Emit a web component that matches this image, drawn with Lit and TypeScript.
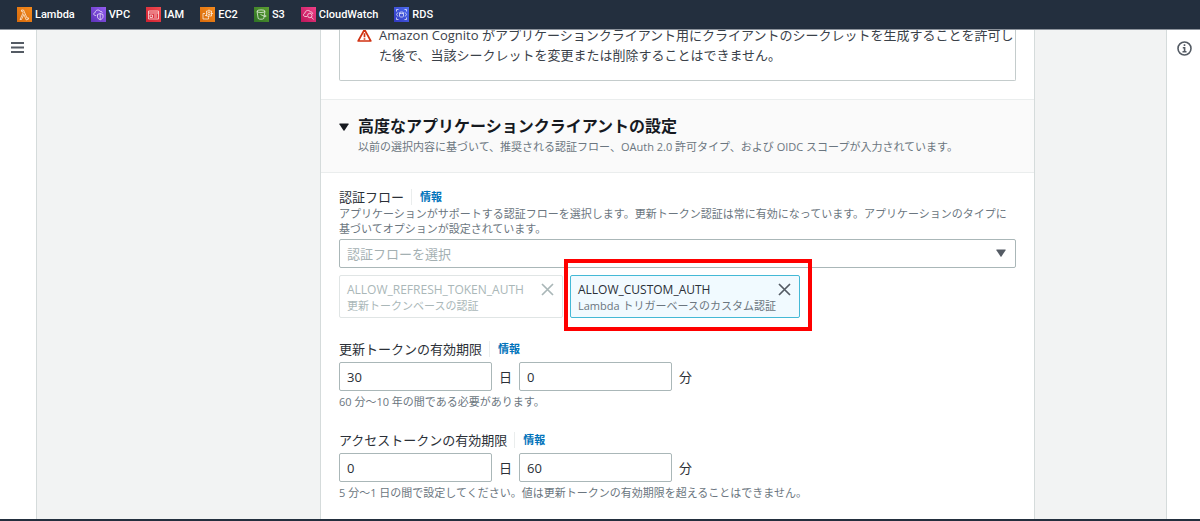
import { LitElement, html, css, svg } from "lit";
import { customElement, state } from "lit/decorators.js";

const glyphs: Record<string, unknown> = {
  Lambda: svg`<path d="M4.5 3h2l3.6 8.2 1.1-.5.5 1.3-2.4 1L6.800 7.400 4.500 12.500H3L6.100 5.800 5.600 4.400H4.500Z"/>`,
  VPC: svg`<path d="M5.200 8.500H4.300C2.200 8.300 2.300 5.700 4.200 5.500 4.500 2.700 8.200 2.200 9.200 4.400c1.300-.3 2 .4 2 1.400M6.500 7.500 9.200 6.500l2.800 1v2.400c0 1.400-1.500 2.400-2.800 2.900-1.300-.5-2.700-1.500-2.700-2.900ZM9.200 6.500v6"/>`,
  IAM: svg`<path d="M2.500 4h10v8h-10ZM2.500 6h10M4 8h2.500v2.500H4ZM8 8h3M8 10h3"/>`,
  EC2: svg`<path d="M6.500 4h5v5h-5ZM5 6.500H3v5.500h5.500V10.500M9 4V2.500M11.500 6.500H13M5 8.500h1.500M8.500 9v1.500"/><circle cx="9" cy="6.500" r="1.200"/>`,
  S3: svg`<ellipse cx="7" cy="4.200" rx="4" ry="1.300"/><path d="M3 4.200 4.200 11.500c1 1 4.600 1 5.600 0L11 4.200M6.500 7.500l4.500 2c1.500.5 1.500-.8 0-1.500"/>`,
  CloudWatch: svg`<path d="M6 9.500H4C1.800 9.200 2.200 6.400 4 6.200 4.200 3 8.500 2.500 9.400 5c1.600-.3 2.300.8 2.300 2"/><circle cx="8.800" cy="8.500" r="2.200"/><path d="m10.400 10.200 2.200 2.300"/>`,
  RDS: svg`<ellipse cx="7.500" cy="5.800" rx="2" ry=".8"/><path d="M5.500 5.800v3.500c.5 1 3.500 1 4 0V5.800M2.500 4.500V2.500h2M10.500 2.500h2v2M2.500 10.500v2h2M10.500 12.500h2v-2M3.800 5.500 2.600 7.500l1.200 2M11.200 5.500l1.200 2-1.200 2"/>`,
};

const services = [
  { name: "Lambda", from: "#f58a1c", to: "#d66a0c" },
  { name: "VPC", from: "#945df2", to: "#5c31b8" },
  { name: "IAM", from: "#f04a50", to: "#ce2030" },
  { name: "EC2", from: "#f58a1c", to: "#d66a0c" },
  { name: "S3", from: "#5c9e31", to: "#2d7224" },
  { name: "CloudWatch", from: "#f13f87", to: "#ba1659" },
  { name: "RDS", from: "#4d6cf0", to: "#3138c0" },
];

const validity = [
  {
    id: "refresh",
    label: "更新トークンの有効期限",
    days: 30,
    minutes: 0,
    hint: "60 分～10 年の間である必要があります。",
  },
  {
    id: "access",
    label: "アクセストークンの有効期限",
    days: 0,
    minutes: 60,
    hint: "5 分～1 日の間で設定してください。値は更新トークンの有効期限を超えることはできません。",
  },
];

@customElement("app-root")
export class AppRoot extends LitElement {
  static styles = css`
    :host {
      display: flex;
      flex-direction: column;
      height: 100vh;
      overflow: hidden;
      background: #f2f3f3;
      color: #2b3037;
      font: 13px/20px "Open Sans", "Noto Sans CJK JP", sans-serif;
    }
    * {
      box-sizing: border-box;
    }
    button,
    input,
    select {
      font: inherit;
      color: inherit;
      margin: 0;
    }
    button {
      display: flex;
      padding: 0;
      border: 0;
      background: none;
      cursor: pointer;
    }
    svg {
      display: block;
      flex: none;
    }
    .services {
      display: flex;
      align-items: center;
      gap: 16px;
      flex: none;
      height: 30px;
      padding: 0 17px;
      background: #232f3e;
      border-bottom: 1px solid #8d949c;
      z-index: 1;
    }
    .service {
      display: flex;
      align-items: center;
      gap: 3px;
      color: #fff;
      font-family: Roboto, "Open Sans", sans-serif;
      font-size: 11px;
      font-weight: 500;
      text-decoration: none;
    }
    .service-icon {
      fill: none;
      stroke: #fff;
      stroke-opacity: 0.85;
      stroke-width: 0.8;
    }
    .body {
      display: flex;
      flex: 1;
      min-height: 0;
    }
    .rail {
      flex: none;
      background: #fff;
      padding: 11px 10px;
    }
    .rail-left {
      width: 37px;
      border-right: 1px solid #d5dbdb;
    }
    .rail-right {
      width: 34px;
      border-left: 1px solid #d5dbdb;
    }
    .footer {
      flex: none;
      height: 2px;
      background: #232f3e;
    }
    main {
      flex: 1;
      min-width: 0;
      overflow: hidden;
      padding: 0 131px 0 283px;
    }
    .card {
      min-height: 100%;
      background: #fff;
      border: 1px solid #d5dbdb;
      border-width: 0 1px;
    }
    .alert {
      display: flex;
      gap: 7px;
      margin: -5px 18px 18px;
      padding: 0 0 15px 17px;
      border: 1px solid #c4cccc;
      border-top: 0;
      border-radius: 0 0 2px 2px;
      color: #3a4149;
    }
    .alert p {
      margin: 0;
    }
    .alert svg {
      margin-top: 3px;
    }
    .section-head {
      padding: 14px 18px 18px;
      background: #fafafa;
      border: 1px solid #eaeded;
      border-width: 1px 0;
    }
    .toggle {
      align-items: center;
      gap: 9px;
      color: #16191f;
      font-size: 16px;
      line-height: 25px;
      font-weight: 700;
    }
    h2 {
      margin: 0;
      font: inherit;
    }
    .section-head p {
      margin: 0;
      padding-left: 19px;
    }
    .hint {
      margin: 0;
      font-size: 11px;
      line-height: 15px;
      color: #6b7680;
    }
    .form {
      display: grid;
      gap: 22px;
      padding: 15px 18px 20px;
    }
    .label-row {
      display: flex;
      align-items: center;
      line-height: 18px;
    }
    .info {
      margin-left: 7px;
      padding-left: 8px;
      border-left: 1px solid #eaeded;
      font-size: 11px;
      line-height: 16px;
      font-weight: 700;
      color: #0073bb;
      text-decoration: none;
    }
    .select-wrap {
      position: relative;
      margin-top: 3px;
    }
    .control {
      display: block;
      height: 29px;
      padding: 0 7px;
      border: 1px solid #aab7b8;
      border-radius: 2px;
      background: #fff;
      outline: 0;
    }
    .select {
      appearance: none;
      width: 100%;
      color: #a4b0b2;
    }
    .caret {
      position: absolute;
      top: 10px;
      right: 10px;
      pointer-events: none;
    }
    .tokens {
      display: flex;
      gap: 7px;
      margin-top: 7px;
    }
    .token {
      position: relative;
      display: flex;
      justify-content: space-between;
      align-items: flex-start;
      gap: 2px;
      min-width: 224px;
      padding: 6px 8px 4px 7px;
      border: 1px solid #44b9d6;
      border-radius: 2px;
      background: #f1faff;
      font-size: 12px;
      line-height: 16px;
    }
    .token-wide {
      min-width: 230px;
    }
    .token-off {
      border-color: #e0e5e5;
      background: #fff;
      color: #aab7b8;
    }
    .token-off .hint {
      color: #aab7b8;
    }
    .token button {
      padding-top: 1px;
      color: #545b64;
    }
    .token-off button {
      color: #aab7b8;
    }
    .marker {
      position: absolute;
      inset: -17px -13px -14px -7px;
      border: 4px solid #f00;
      pointer-events: none;
    }
    .duration {
      display: flex;
      align-items: center;
      gap: 7px;
      margin: 4px 0 3px;
    }
    .number {
      width: 153px;
    }
  `;

  @state() private open = true;

  private info() {
    return html`<a class="info" href="#info">情報</a>`;
  }

  private cross() {
    return html`<svg width="13" height="13" viewBox="0 0 13 13" fill="none" stroke="currentColor" stroke-width="1.700">
      <path d="m1 1 11 11M12 1 1 12" />
    </svg>`;
  }

  private caret(cls: string, color: string) {
    return html`<svg class=${cls} width="10" height="8" viewBox="0 0 10 8" fill=${color}>
      <path d="M.8.500h8.400q.8 0 .4.700L5.500 7.400q-.5.600-1 0L.4 1.200Q0 .500.800.500Z" />
    </svg>`;
  }

  render() {
    return html`
      <header class="services">
        ${services.map(
          (s) => html`<a class="service" href="#${s.name}">
            <svg class="service-icon" width="15" height="15" viewBox="0 0 15 15">
              <defs>
                <linearGradient id="g-${s.name}" x1="1" y1="0" x2="0" y2="1">
                  <stop offset="0" stop-color=${s.from} />
                  <stop offset="1" stop-color=${s.to} />
                </linearGradient>
              </defs>
              <rect width="15" height="15" fill="url(#g-${s.name})" stroke="none" />
              ${glyphs[s.name]}
            </svg>
            ${s.name}
          </a>`
        )}
      </header>
      <div class="body">
        <nav class="rail rail-left">
          <button aria-label="メニュー">
            <svg width="15" height="14" viewBox="0 0 15 14" stroke="#545b64" stroke-width="1.800">
              <path d="M1 2h13M1 6.500h13M1 11h13" />
            </svg>
          </button>
        </nav>
        <main>
          <div class="card">
            <div class="alert">
              <svg width="15" height="14" viewBox="0 0 15 14" fill="none" stroke="#d13212" stroke-width="1.700" stroke-linejoin="round">
                <path d="M7.500 1.500 13.800 13H1.200ZM7.500 5.300v3.900M7.500 10.200v1.500" />
              </svg>
              <p>
                Amazon Cognito がアプリケーションクライアント用にクライアントのシークレットを生成することを許可し<br />た後で、当該シークレットを変更または削除することはできません。
              </p>
            </div>
            <div class="section-head">
              <button class="toggle" aria-expanded=${this.open} @click=${() => (this.open = !this.open)}>
                ${this.caret("", "#16191f")}
                <h2>高度なアプリケーションクライアントの設定</h2>
              </button>
              <p class="hint">
                以前の選択内容に基づいて、推奨される認証フロー、OAuth 2.0 許可タイプ、および OIDC スコープが入力されています。
              </p>
            </div>
            ${this.open ? this.form() : ""}
          </div>
        </main>
        <aside class="rail rail-right">
          <button aria-label="情報パネル">
            <svg width="15" height="15" viewBox="0 0 15 15" fill="none" stroke="#545b64" stroke-width="1.600">
              <circle cx="7.500" cy="7.500" r="6.500" />
              <path d="M7.500 3.300v1.700M5.800 6.800h1.800v4M5.500 10.800h4" />
            </svg>
          </button>
        </aside>
      </div>
      <footer class="footer"></footer>
    `;
  }

  private form() {
    return html`<div class="form">
      <div>
        <div class="label-row"><label for="flow">認証フロー</label>${this.info()}</div>
        <p class="hint">
          アプリケーションがサポートする認証フローを選択します。更新トークン認証は常に有効になっています。アプリケーションのタイプに基づいてオプションが設定されています。
        </p>
        <div class="select-wrap">
          <select id="flow" class="control select">
            <option>認証フローを選択</option>
          </select>
          ${this.caret("caret", "#545b64")}
        </div>
        <div class="tokens">
          <div class="token token-off">
            <div>ALLOW_REFRESH_TOKEN_AUTH<p class="hint">更新トークンベースの認証</p></div>
            <button disabled aria-label="ALLOW_REFRESH_TOKEN_AUTH を削除">${this.cross()}</button>
          </div>
          <div class="token token-wide">
            <div>ALLOW_CUSTOM_AUTH<p class="hint">Lambda トリガーベースのカスタム認証</p></div>
            <button aria-label="ALLOW_CUSTOM_AUTH を削除">${this.cross()}</button>
            <span class="marker"></span>
          </div>
        </div>
      </div>
      ${validity.map(
        (v) => html`<div>
          <div class="label-row"><label for="${v.id}-days">${v.label}</label>${this.info()}</div>
          <div class="duration">
            <input id="${v.id}-days" class="control number" inputmode="numeric" .value=${String(v.days)} />
            <label for="${v.id}-days">日</label>
            <input id="${v.id}-minutes" class="control number" inputmode="numeric" .value=${String(v.minutes)} />
            <label for="${v.id}-minutes">分</label>
          </div>
          <p class="hint">${v.hint}</p>
        </div>`
      )}
    </div>`;
  }
}
